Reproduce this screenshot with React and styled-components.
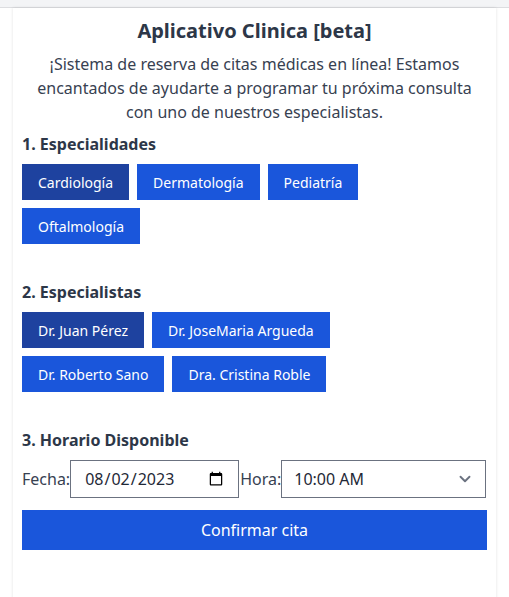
import React, { useState } from "react";
import styled, { createGlobalStyle } from "styled-components";
import { ChevronDown } from "lucide-react";

const Global = createGlobalStyle`
  html, body { margin: 0; padding: 0; background: #ffffff; }
  body { font-family: "Noto Sans", "Open Sans", sans-serif; color: #374151; }
  * { box-sizing: border-box; }
`;

const TopBar = styled.div`
  height: 8px;
  background: #f3f4f6;
  border-bottom: 1px solid #dcdde0;
`;

const Card = styled.main`
  margin: 0 13px;
  min-height: 640px;
  background: #fff;
  box-shadow: 0 0 3px rgba(0, 0, 0, 0.12);
  padding: 9px 9px 0;
`;

const Title = styled.h1`
  margin: 0;
  font-size: 20px;
  line-height: 28px;
  font-weight: 700;
  text-align: center;
  color: #2d3748;
`;

const Intro = styled.p`
  margin: 7px 0 8px;
  font-size: 16px;
  line-height: 24px;
  text-align: center;
  color: #374151;
`;

const Section = styled.section`
  margin-top: ${(p) => p.$gap || 0}px;
`;

const Heading = styled.h2`
  margin: 0 0 8px;
  font-size: 16px;
  line-height: 24px;
  font-weight: 700;
  color: #2d3748;
`;

const ButtonGroup = styled.div`
  display: flex;
  flex-wrap: wrap;
  padding-right: 4px;
  margin-bottom: -8px;
`;

const Choice = styled.button`
  height: 36px;
  padding: 0 16px;
  margin: 0 8px 8px 0;
  border: none;
  border-radius: 0;
  font-family: inherit;
  font-size: 14px;
  color: #fff;
  background: ${(p) => (p.$active ? "#1e429f" : "#1a56db")};
  cursor: pointer;
`;

const TimeRow = styled.div`
  display: flex;
  align-items: center;
  margin-bottom: 12px;
`;

const Label = styled.label`
  font-size: 16px;
  color: #374151;
`;

const DateInput = styled.input`
  width: 169px;
  height: 38px;
  padding: 0 12px 0 13px;
  margin: 0 1px 0 0;
  border: 1px solid #6b7280;
  border-radius: 0;
  font-family: inherit;
  font-size: 16px;
  color: #1f2937;
  background: #fff;
`;

const SelectWrap = styled.div`
  position: relative;
  width: 205px;
`;

const Select = styled.select`
  width: 100%;
  height: 38px;
  padding: 0 12px;
  border: 1px solid #6b7280;
  border-radius: 0;
  font-family: inherit;
  font-size: 16px;
  color: #1f2937;
  background: #fff;
  appearance: none;
  -webkit-appearance: none;
`;

const Chevron = styled.span`
  position: absolute;
  right: 12px;
  top: 10px;
  color: #6b7280;
  pointer-events: none;
  display: flex;
`;

const Confirm = styled.button`
  width: 100%;
  height: 40px;
  border: none;
  border-radius: 0;
  background: #1a56db;
  color: #fff;
  font-family: inherit;
  font-size: 16px;
  cursor: pointer;
`;

const especialidades = ["Cardiología", "Dermatología", "Pediatría", "Oftalmología"];
const especialistas = ["Dr. Juan Pérez", "Dr. JoseMaria Argueda", "Dr. Roberto Sano", "Dra. Cristina Roble"];

export default function App() {
  const [esp, setEsp] = useState(0);
  const [doc, setDoc] = useState(0);
  return (
    <>
      <Global />
      <TopBar />
      <Card>
        <Title>Aplicativo Clinica [beta]</Title>
        <Intro>
          ¡Sistema de reserva de citas médicas en línea! Estamos encantados de ayudarte a programar tu próxima consulta con uno de nuestros especialistas.
        </Intro>
        <Section>
          <Heading>1. Especialidades</Heading>
          <ButtonGroup>
            {especialidades.map((e, i) => (
              <Choice key={e} $active={i === esp} onClick={() => setEsp(i)}>{e}</Choice>
            ))}
          </ButtonGroup>
        </Section>
        <Section $gap={36}>
          <Heading>2. Especialistas</Heading>
          <ButtonGroup>
            {especialistas.map((e, i) => (
              <Choice key={e} $active={i === doc} onClick={() => setDoc(i)}>{e}</Choice>
            ))}
          </ButtonGroup>
        </Section>
        <Section $gap={36}>
          <Heading>3. Horario Disponible</Heading>
          <TimeRow>
            <Label htmlFor="fecha">Fecha:</Label>
            <DateInput id="fecha" type="date" defaultValue="2023-08-02" />
            <Label htmlFor="hora">Hora:</Label>
            <SelectWrap>
              <Select id="hora" defaultValue="10:00 AM">
                <option>9:00 AM</option>
                <option>10:00 AM</option>
                <option>11:00 AM</option>
              </Select>
              <Chevron><ChevronDown size={18} strokeWidth={2.5} /></Chevron>
            </SelectWrap>
          </TimeRow>
          <Confirm>Confirmar cita</Confirm>
        </Section>
      </Card>
    </>
  );
}
